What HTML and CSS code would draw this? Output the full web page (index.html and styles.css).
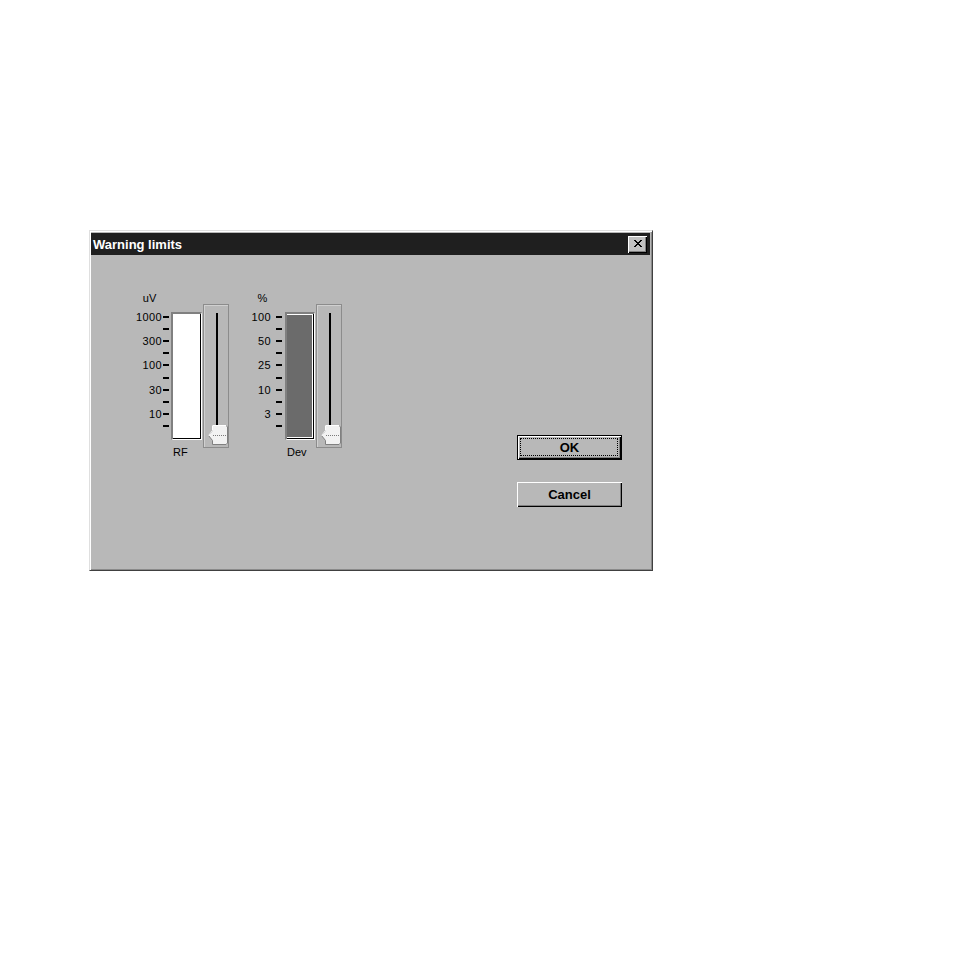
FILE: index.html
```html
<!DOCTYPE html>
<html>
<head>
<meta charset="utf-8">
<title>Warning limits</title>
<link rel="stylesheet" href="styles.css">
</head>
<body>
<div class="window">
  <div class="titlebar">
    <span class="title">Warning limits</span>
    <div class="close">
      <svg width="8" height="7" viewBox="0 0 8 7"><path d="M0 0h2v1h1v1h2V1h1V0h2v1H7v1H6v1H5v1h1v1h1v1h1v1H6V6H5V5H3v1H2v1H0V6h1V5h1V4h1V3H2V2H1V1H0z" fill="#000"/></svg>
    </div>
  </div>
  <div class="client">
    <div class="meters">
      <div class="meter meter-rf">
        <div class="scalecol">
          <div class="unit">uV</div>
          <div class="scale">
            <div class="row"><span class="lbl">1000</span><span class="tick"></span></div>
            <div class="row"><span class="lbl"></span><span class="tick"></span></div>
            <div class="row"><span class="lbl">300</span><span class="tick"></span></div>
            <div class="row"><span class="lbl"></span><span class="tick"></span></div>
            <div class="row"><span class="lbl">100</span><span class="tick"></span></div>
            <div class="row"><span class="lbl"></span><span class="tick"></span></div>
            <div class="row"><span class="lbl">30</span><span class="tick"></span></div>
            <div class="row"><span class="lbl"></span><span class="tick"></span></div>
            <div class="row"><span class="lbl">10</span><span class="tick"></span></div>
            <div class="row"><span class="lbl"></span><span class="tick"></span></div>
          </div>
        </div>
        <div class="barcol">
          <div class="bar"><div class="fill"></div></div>
          <div class="name">RF</div>
        </div>
        <div class="slider">
          <div class="track"></div>
          <svg class="thumb" width="20" height="20" viewBox="0 0 20 20">
            <polygon points="0.5,10.5 4.5,5.5 4.5,0.5 18,0.5 19.5,2 19.5,18 18,19.5 4.5,19.5 4.5,15.5" fill="#f2f2f2" stroke="#808080"/>
            <polyline points="0.5,10.5 4.5,5.5 4.5,0.5 18,0.5" fill="none" stroke="#ffffff"/>
            <line x1="5" y1="10.5" x2="19" y2="10.5" stroke="#7a7a7a" stroke-dasharray="1 1"/>
          </svg>
        </div>
      </div>
      <div class="meter meter-dev">
        <div class="scalecol">
          <div class="unit">%</div>
          <div class="scale">
            <div class="row"><span class="lbl">100</span><span class="tick"></span></div>
            <div class="row"><span class="lbl"></span><span class="tick"></span></div>
            <div class="row"><span class="lbl">50</span><span class="tick"></span></div>
            <div class="row"><span class="lbl"></span><span class="tick"></span></div>
            <div class="row"><span class="lbl">25</span><span class="tick"></span></div>
            <div class="row"><span class="lbl"></span><span class="tick"></span></div>
            <div class="row"><span class="lbl">10</span><span class="tick"></span></div>
            <div class="row"><span class="lbl"></span><span class="tick"></span></div>
            <div class="row"><span class="lbl">3</span><span class="tick"></span></div>
            <div class="row"><span class="lbl"></span><span class="tick"></span></div>
          </div>
        </div>
        <div class="barcol">
          <div class="bar"><div class="fill"></div></div>
          <div class="name">Dev</div>
        </div>
        <div class="slider">
          <div class="track"></div>
          <svg class="thumb" width="20" height="20" viewBox="0 0 20 20">
            <polygon points="0.5,10.5 4.5,5.5 4.5,0.5 18,0.5 19.5,2 19.5,18 18,19.5 4.5,19.5 4.5,15.5" fill="#f2f2f2" stroke="#808080"/>
            <polyline points="0.5,10.5 4.5,5.5 4.5,0.5 18,0.5" fill="none" stroke="#ffffff"/>
            <line x1="5" y1="10.5" x2="19" y2="10.5" stroke="#7a7a7a" stroke-dasharray="1 1"/>
          </svg>
        </div>
      </div>
    </div>
    <div class="buttons">
      <div class="btn btn-default">OK</div>
      <div class="btn">Cancel</div>
    </div>
  </div>
</div>
</body>
</html>
```

FILE: styles.css
```css
html, body {
  margin: 0;
  padding: 0;
  background: #ffffff;
  font-family: "Liberation Sans", Arial, sans-serif;
}

.window {
  margin: 230px 0 0 89px;
  width: 564px;
  height: 341px;
  box-sizing: border-box;
  border: 1px solid;
  border-color: #dfdfdf #404040 #404040 #dfdfdf;
  box-shadow: inset 1px 1px #ffffff, inset -1px -1px #8a8a8a;
  padding: 2px 2px 1px 1px;
  background: #b8b8b8;
  display: flex;
  flex-direction: column;
}

.titlebar {
  height: 22px;
  background: #1f1f1f;
  display: flex;
  align-items: center;
  padding: 0 3px 0 2px;
  flex: none;
}

.title {
  flex: 1;
  color: #ffffff;
  font-weight: bold;
  font-size: 13px;
  line-height: 15px;
}

.close {
  width: 19px;
  height: 17px;
  box-sizing: border-box;
  background: #c0c0c0;
  box-shadow: inset 1px 1px #ffffff, inset -1px -1px #000000, inset -2px -2px #808080;
  display: flex;
  align-items: center;
  justify-content: center;
}

.close svg {
  display: block;
  margin-top: -1px;
}

.client {
  flex: 1;
  display: flex;
}

.meters {
  display: flex;
  padding: 37px 0 0 39px;
  gap: 14px;
}

.meter {
  display: flex;
  align-items: flex-start;
}

.scalecol {
  width: 39px;
  display: flex;
  flex-direction: column;
}

.unit {
  height: 12px;
  font-size: 11px;
  line-height: 12px;
  text-align: center;
}

.scale {
  margin-top: 7px;
  display: flex;
  flex-direction: column;
}

.row {
  height: 12.1px;
  display: flex;
  align-items: center;
}

.lbl {
  flex: 1;
  text-align: right;
  font-size: 11px;
  line-height: 12px;
  letter-spacing: 0.4px;
  color: #000000;
}

.meter-rf .lbl { padding-right: 1px; }
.meter-dev .lbl { padding-right: 5px; }

.tick {
  width: 6px;
  height: 2px;
  background: #000000;
  flex: none;
}

.barcol {
  padding-top: 20px;
  display: flex;
  flex-direction: column;
}

.meter-rf .barcol { margin-left: 2px; }
.meter-dev .barcol { margin-left: 3px; }

.bar {
  height: 128px;
  box-sizing: border-box;
  border-style: solid;
  border-width: 2px 1px 1px 2px;
  border-color: #808080 #ffffff #ffffff #808080;
  display: flex;
}

.meter-rf .bar { width: 31px; }
.meter-dev .bar { width: 30px; }

.fill {
  flex: 1;
  border-right: 1px solid #000000;
  border-bottom: 1px solid #000000;
}

.meter-rf .fill { background: #ffffff; }
.meter-dev .fill {
  background: #6b6b6b;
  box-shadow: inset 0 1px #ffffff, inset -1px -1px #ffffff;
}

.name {
  margin-top: 6px;
  padding-left: 2px;
  font-size: 11px;
  line-height: 12px;
}

.slider {
  position: relative;
  margin-top: 12px;
  margin-left: 1px;
  width: 26px;
  height: 144px;
  box-sizing: border-box;
  border: 1px solid #8c8c8c;
  box-shadow: inset 1px 1px #d0d0d0;
}

.track {
  margin: 8px 0 0 12px;
  width: 2px;
  height: 116px;
  background: #000000;
}

.thumb {
  position: absolute;
  left: 4px;
  bottom: 2px;
  display: block;
}

.buttons {
  margin-left: auto;
  margin-right: 28px;
  padding-top: 180px;
  display: flex;
  flex-direction: column;
  gap: 22px;
}

.btn {
  position: relative;
  width: 105px;
  height: 25px;
  box-sizing: border-box;
  background: #b8b8b8;
  box-shadow: inset 1px 1px #ffffff, inset -1px -1px #000000, inset -2px -2px #808080;
  display: flex;
  align-items: center;
  justify-content: center;
  font-size: 13px;
  font-weight: bold;
  color: #000000;
}

.btn-default {
  border: 1px solid #000000;
}

.btn-default::after {
  content: "";
  position: absolute;
  left: 2px;
  top: 2px;
  right: 3px;
  bottom: 3px;
  border: 1px dotted #000000;
}
```
